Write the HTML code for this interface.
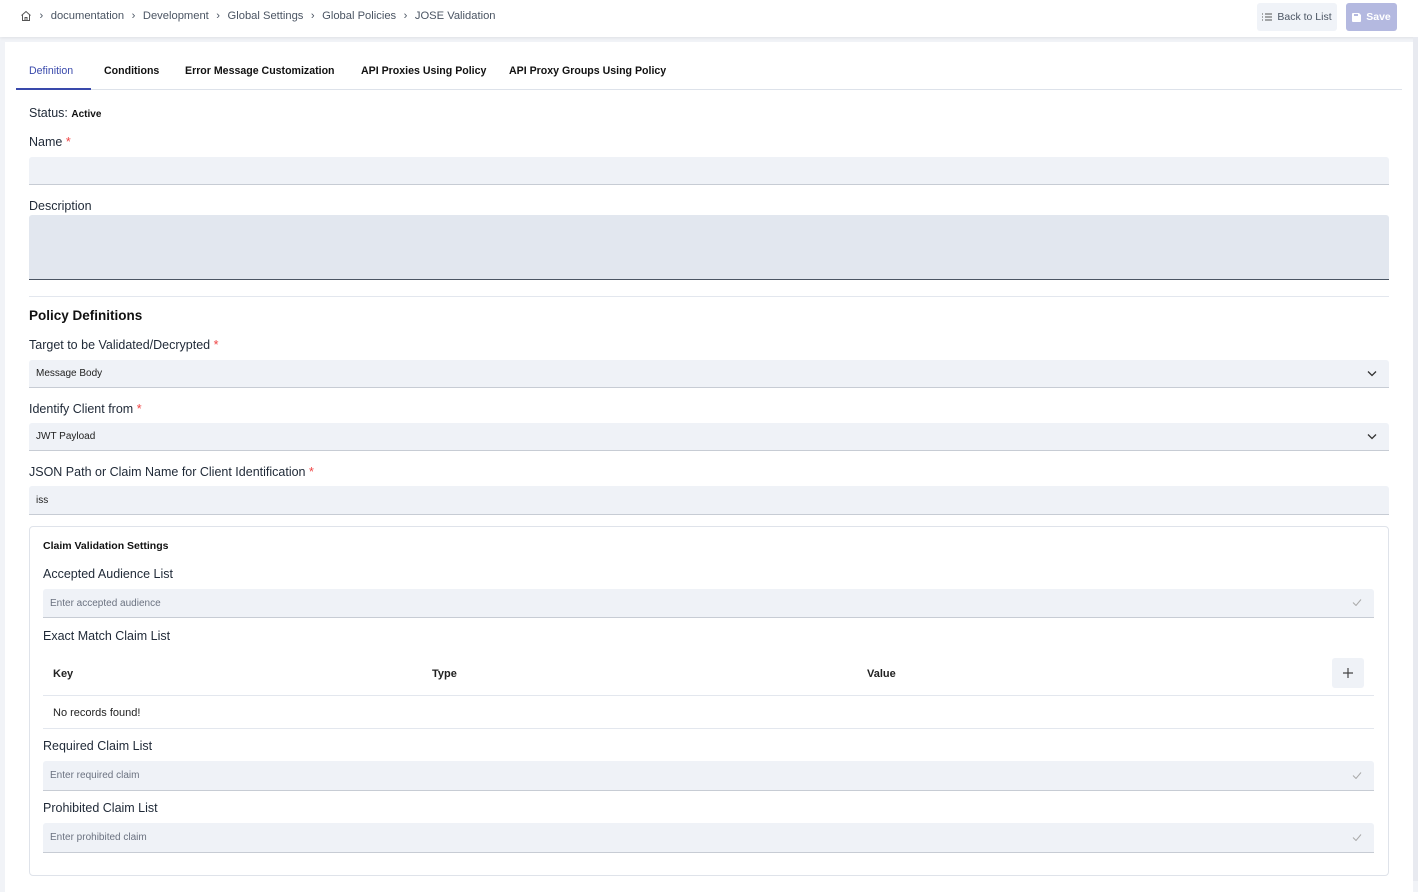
<!DOCTYPE html>
<html><head><meta charset="utf-8"><style>
*{box-sizing:border-box;margin:0;padding:0}
body{width:1418px;height:881px;overflow:hidden;background:#f1f3f7;font-family:"Liberation Sans",sans-serif;color:#1f2937;position:relative}
.abs{position:absolute}
.hdr{left:0;top:0;width:1418px;height:37px;background:#fff;box-shadow:0 1px 3px rgba(0,0,0,.08)}
.bc{left:20px;top:10px;font-size:11.2px;color:#4b5563;display:flex;align-items:center;gap:7.5px}
.card{left:5px;top:42px;width:1408px;height:850px;background:#fff}
.tab{top:65px;font-size:10.6px;font-weight:bold;color:#111}
.lbl{font-size:12.5px;color:#1f2937;left:29px}
.req{color:#ef4444}
.inp{background:#eff2f7;border-bottom:1px solid #c7ccd4;border-radius:3px 3px 0 0;font-size:10px;color:#222;padding-left:7px;display:flex;align-items:center}
.ph{color:#6b7280}
.chev{position:absolute;right:12px;top:50%;margin-top:-4px}
</style></head><body>
<div class="abs hdr"></div>
<div class="abs bc">
<svg width="12" height="12" viewBox="0 0 12 12" fill="none" stroke="#555" stroke-width="1"><path d="M1.5 5.5L6 1.5l4.5 4M2.5 5v5.5h7V5M5 10.5V7.5h2v3"/></svg>
<span>›</span><span>documentation</span><span>›</span><span>Development</span><span>›</span><span>Global Settings</span><span>›</span><span>Global Policies</span><span>›</span><span>JOSE Validation</span></div>
<div class="abs" style="left:1257px;top:3px;width:80px;height:28px;background:#f0f3f8;border-radius:3px;font-size:10.5px;color:#4b5563;display:flex;align-items:center;justify-content:center;gap:5px"><svg width="10" height="8" viewBox="0 0 10 8" stroke="#555" stroke-width="1"><path d="M0 1h1M3 1h7M0 4h1M3 4h7M0 7h1M3 7h7"/></svg>Back to List</div>
<div class="abs" style="left:1346px;top:3px;width:51px;height:28px;background:#b4b9e0;border-radius:3px;font-size:10.5px;font-weight:bold;color:#fff;display:flex;align-items:center;justify-content:center;gap:5px"><svg width="9" height="9" viewBox="0 0 9 9" fill="#fff"><path d="M0 1a1 1 0 011-1h6l2 2v6a1 1 0 01-1 1H1a1 1 0 01-1-1z"/><rect x="2" y="1" width="4" height="2" fill="#b4b9e0"/></svg>Save</div>
<div class="abs" style="left:1413px;top:37px;width:5px;height:844px;background:#e8eaf0"></div>
<div class="abs card"></div>
<div class="abs tab" style="left:29px;color:#3949ab;font-weight:normal">Definition</div>
<div class="abs tab" style="left:104px">Conditions</div>
<div class="abs tab" style="left:185px">Error Message Customization</div>
<div class="abs tab" style="left:361px">API Proxies Using Policy</div>
<div class="abs tab" style="left:509px">API Proxy Groups Using Policy</div>
<div class="abs" style="left:16px;top:89px;width:1386px;height:1px;background:#dde2ea"></div>
<div class="abs" style="left:16px;top:88px;width:75px;height:2px;background:#3949ab"></div>
<div class="abs lbl" style="top:106px">Status: <b style="font-size:10px;color:#111">Active</b></div>
<div class="abs lbl" style="top:135px">Name <span class="req">*</span></div>
<div class="abs inp" style="left:29px;top:157px;width:1360px;height:28px"></div>
<div class="abs lbl" style="top:199px">Description</div>
<div class="abs" style="left:29px;top:215px;width:1360px;height:65px;background:#e2e7ef;border-bottom:1px solid #4b5563;border-radius:3px 3px 0 0"></div>
<div class="abs" style="left:29px;top:296px;width:1360px;height:1px;background:#e3e7ee"></div>
<div class="abs lbl" style="top:308px;font-size:13.5px;font-weight:bold;color:#111">Policy Definitions</div>
<div class="abs lbl" style="top:338px">Target to be Validated/Decrypted <span class="req">*</span></div>
<div class="abs inp" style="left:29px;top:360px;width:1360px;height:28px">Message Body<svg class="chev" width="10" height="7" viewBox="0 0 10 7" fill="none" stroke="#333" stroke-width="1.3"><path d="M1 1.5l4 4 4-4"/></svg></div>
<div class="abs lbl" style="top:402px">Identify Client from <span class="req">*</span></div>
<div class="abs inp" style="left:29px;top:423px;width:1360px;height:28px">JWT Payload<svg class="chev" width="10" height="7" viewBox="0 0 10 7" fill="none" stroke="#333" stroke-width="1.3"><path d="M1 1.5l4 4 4-4"/></svg></div>
<div class="abs lbl" style="top:465px">JSON Path or Claim Name for Client Identification <span class="req">*</span></div>
<div class="abs inp" style="left:29px;top:486px;width:1360px;height:29px">iss</div>
<div class="abs" style="left:29px;top:526px;width:1360px;height:350px;border:1px solid #dfe3ea;border-radius:4px"></div>
<div class="abs" style="left:43px;top:540px;font-size:10.5px;font-weight:bold;color:#111">Claim Validation Settings</div>
<div class="abs" style="left:43px;top:567px;font-size:12.5px">Accepted Audience List</div>
<div class="abs inp" style="left:43px;top:589px;width:1331px;height:29px"><span class="ph">Enter accepted audience</span><svg class="chev" width="10" height="7" viewBox="0 0 10 7" fill="none" stroke="#aaa"><path d="M1 3.5l3 3 5-6"/></svg></div>
<div class="abs" style="left:43px;top:629px;font-size:12.5px">Exact Match Claim List</div>
<div class="abs" style="left:53px;top:668px;font-size:11px;font-weight:bold;color:#222">Key</div>
<div class="abs" style="left:432px;top:668px;font-size:11px;font-weight:bold;color:#222">Type</div>
<div class="abs" style="left:867px;top:668px;font-size:11px;font-weight:bold;color:#222">Value</div>
<div class="abs" style="left:1332px;top:658px;width:32px;height:30px;background:#eff2f7;border-radius:3px;display:flex;align-items:center;justify-content:center"><svg width="10" height="10" viewBox="0 0 10 10" stroke="#444" stroke-width="1.2"><path d="M5 0v10M0 5h10"/></svg></div>
<div class="abs" style="left:43px;top:695px;width:1331px;height:1px;background:#e3e7ee"></div>
<div class="abs" style="left:53px;top:707px;font-size:11px;color:#222">No records found!</div>
<div class="abs" style="left:43px;top:728px;width:1331px;height:1px;background:#e3e7ee"></div>
<div class="abs" style="left:43px;top:739px;font-size:12.5px">Required Claim List</div>
<div class="abs inp" style="left:43px;top:761px;width:1331px;height:30px"><span class="ph">Enter required claim</span><svg class="chev" width="10" height="7" viewBox="0 0 10 7" fill="none" stroke="#aaa"><path d="M1 3.5l3 3 5-6"/></svg></div>
<div class="abs" style="left:43px;top:801px;font-size:12.5px">Prohibited Claim List</div>
<div class="abs inp" style="left:43px;top:823px;width:1331px;height:30px"><span class="ph">Enter prohibited claim</span><svg class="chev" width="10" height="7" viewBox="0 0 10 7" fill="none" stroke="#aaa"><path d="M1 3.5l3 3 5-6"/></svg></div>
</body></html>
